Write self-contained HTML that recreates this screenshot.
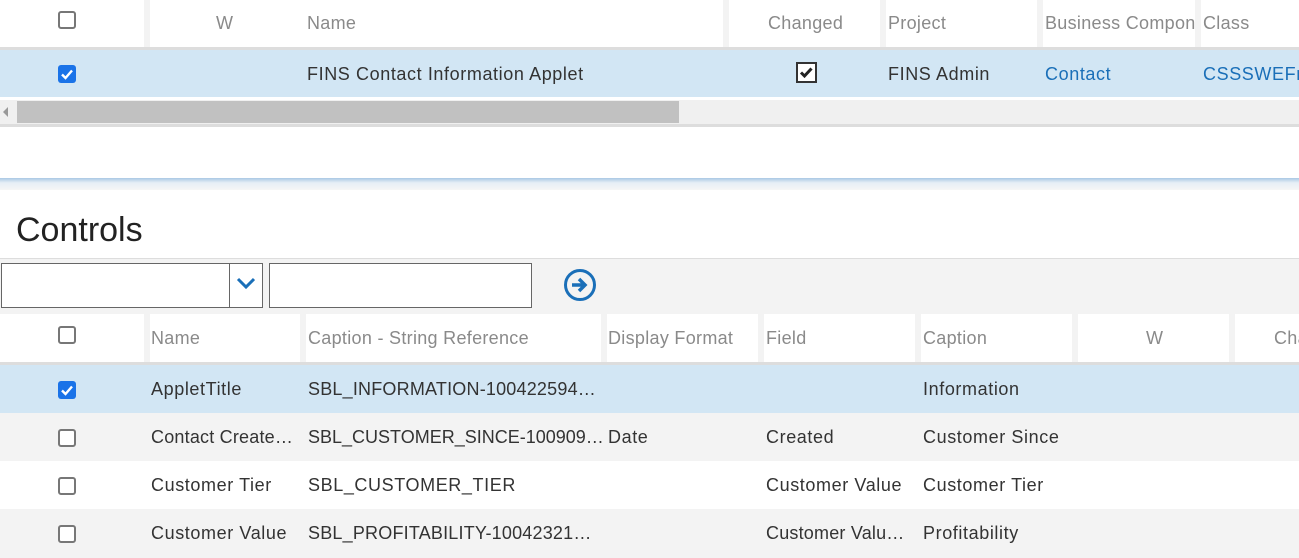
<!DOCTYPE html>
<html><head><meta charset="utf-8"><style>
*{margin:0;padding:0;box-sizing:border-box}
body{width:1299px;height:558px;overflow:hidden;background:#fff;font-family:"Liberation Sans",sans-serif;position:relative}
.a{position:absolute}
.t{position:absolute;font-size:18px;white-space:nowrap;line-height:20px}
.h{color:#8a8a8a;letter-spacing:0.3px}
.d{color:#333;letter-spacing:0.6px}
.s{letter-spacing:0.2px}
.sep{position:absolute;width:6px;background:#f3f3f3}
.cb{position:absolute;width:18px;height:18px;border:2px solid #777;border-radius:3px;background:#fff}
.cbc{position:absolute;width:18px;height:18px;border-radius:3px;background:#1a73e8}
</style></head><body>
<div class="a" style="left:0;top:0;width:1299px;height:47px;background:#fff"></div>
<div class="sep" style="left:144px;top:0;height:47px"></div>
<div class="sep" style="left:723px;top:0;height:47px"></div>
<div class="sep" style="left:880px;top:0;height:47px"></div>
<div class="sep" style="left:1037px;top:0;height:47px"></div>
<div class="sep" style="left:1195px;top:0;height:47px"></div>
<div class="cb" style="left:58px;top:11px"></div>
<div class="t h" style="left:216px;top:13px">W</div>
<div class="t h" style="left:307px;top:13px">Name</div>
<div class="t h" style="left:768px;top:13px">Changed</div>
<div class="t h" style="left:888px;top:13px">Project</div>
<div class="t h" style="left:1045px;top:13px;width:150px;overflow:hidden">Business Component</div>
<div class="t h" style="left:1203px;top:13px">Class</div>
<div class="a" style="left:0;top:47px;width:1299px;height:3px;background:#ddd"></div>
<div class="a" style="left:0;top:50px;width:1299px;height:47px;background:#d2e6f4"></div>
<div class="cbc" style="left:58px;top:65px"><svg width="18" height="18"><path d="M4 9.5l3.5 3.5 6.5-7.5" stroke="#fff" stroke-width="2.4" fill="none"/></svg></div>
<div class="t d" style="left:307px;top:64px">FINS Contact Information Applet</div>
<div class="a" style="left:796px;top:62px;width:21px;height:21px;border:2px solid #333;background:#fff"><svg width="17" height="17"><path d="M3 8.5l3.5 3.5 7-7.5" stroke="#222" stroke-width="3" fill="none"/></svg></div>
<div class="t d" style="left:888px;top:64px">FINS Admin</div>
<div class="t d" style="left:1045px;top:64px;color:#1a6fb8">Contact</div>
<div class="t d" style="left:1203px;top:64px;color:#1a6fb8">CSSSWEFrame</div>
<div class="a" style="left:0;top:100px;width:1299px;height:24px;background:#f0f0f0"></div>
<div class="a" style="left:17px;top:101px;width:662px;height:22px;background:#c1c1c1"></div>
<div class="a" style="left:3px;top:107px;width:0;height:0;border-top:5px solid transparent;border-bottom:5px solid transparent;border-right:5px solid #999"></div>
<div class="a" style="left:0;top:124px;width:1299px;height:3px;background:#ddd"></div>
<div class="a" style="left:0;top:178px;width:1299px;height:12px;background:linear-gradient(#a9c8e4,#e6eef6 40%,#f6f6f6)"></div>
<div class="t" style="left:16px;top:210px;font-size:34px;line-height:40px;color:#222">Controls</div>
<div class="a" style="left:0;top:258px;width:1299px;height:56px;background:#f3f3f3;border-top:1px solid #ddd"></div>
<div class="a" style="left:1px;top:263px;width:262px;height:45px;background:#fff;border:1px solid #666"></div>
<div class="a" style="left:229px;top:264px;width:1px;height:43px;background:#666"></div>
<svg class="a" style="left:236px;top:276px" width="20" height="14"><path d="M2 3l8 8 8-8" stroke="#1a6fb8" stroke-width="3" fill="none"/></svg>
<div class="a" style="left:269px;top:263px;width:263px;height:45px;background:#fff;border:1px solid #666"></div>
<svg class="a" style="left:563px;top:268px" width="34" height="34"><circle cx="17" cy="17" r="14.5" stroke="#1a6fb8" stroke-width="3" fill="none"/><path d="M9 17h12M16 11l6 6-6 6" stroke="#1a6fb8" stroke-width="3.5" fill="none"/></svg>
<div class="a" style="left:0;top:314px;width:1299px;height:48px;background:#fff"></div>
<div class="sep" style="left:144px;top:314px;height:48px"></div>
<div class="sep" style="left:300px;top:314px;height:48px"></div>
<div class="sep" style="left:601px;top:314px;height:48px"></div>
<div class="sep" style="left:758px;top:314px;height:48px"></div>
<div class="sep" style="left:915px;top:314px;height:48px"></div>
<div class="sep" style="left:1072px;top:314px;height:48px"></div>
<div class="sep" style="left:1229px;top:314px;height:48px"></div>
<div class="cb" style="left:58px;top:326px"></div>
<div class="t h" style="left:151px;top:328px">Name</div>
<div class="t h" style="left:308px;top:328px">Caption - String Reference</div>
<div class="t h" style="left:608px;top:328px">Display Format</div>
<div class="t h" style="left:766px;top:328px">Field</div>
<div class="t h" style="left:923px;top:328px">Caption</div>
<div class="t h" style="left:1146px;top:328px">W</div>
<div class="t h" style="left:1274px;top:328px">Changed</div>
<div class="a" style="left:0;top:362px;width:1299px;height:3px;background:#ddd"></div>
<div class="a" style="left:0;top:365px;width:1299px;height:48px;background:#d2e6f4"></div>
<div class="a" style="left:0;top:413px;width:1299px;height:48px;background:#f3f3f3"></div>
<div class="a" style="left:0;top:509px;width:1299px;height:49px;background:#f3f3f3"></div>
<div class="cbc" style="left:58px;top:381px"><svg width="18" height="18"><path d="M4 9.5l3.5 3.5 6.5-7.5" stroke="#fff" stroke-width="2.4" fill="none"/></svg></div>
<div class="cb" style="left:58px;top:429px"></div>
<div class="cb" style="left:58px;top:477px"></div>
<div class="cb" style="left:58px;top:525px"></div>
<div class="t d" style="left:151px;top:379px">AppletTitle</div>
<div class="t d s" style="left:308px;top:379px">SBL_INFORMATION-100422594…</div>
<div class="t d" style="left:923px;top:379px">Information</div>
<div class="t d s" style="left:151px;top:427px">Contact Create…</div>
<div class="t d" style="left:308px;top:427px;letter-spacing:0">SBL_CUSTOMER_SINCE-100909…</div>
<div class="t d" style="left:608px;top:427px">Date</div>
<div class="t d" style="left:766px;top:427px">Created</div>
<div class="t d" style="left:923px;top:427px">Customer Since</div>
<div class="t d" style="left:151px;top:475px">Customer Tier</div>
<div class="t d" style="left:308px;top:475px">SBL_CUSTOMER_TIER</div>
<div class="t d" style="left:766px;top:475px">Customer Value</div>
<div class="t d" style="left:923px;top:475px">Customer Tier</div>
<div class="t d" style="left:151px;top:523px">Customer Value</div>
<div class="t d s" style="left:308px;top:523px">SBL_PROFITABILITY-10042321…</div>
<div class="t d s" style="left:766px;top:523px">Customer Valu…</div>
<div class="t d" style="left:923px;top:523px">Profitability</div>
</body></html>
